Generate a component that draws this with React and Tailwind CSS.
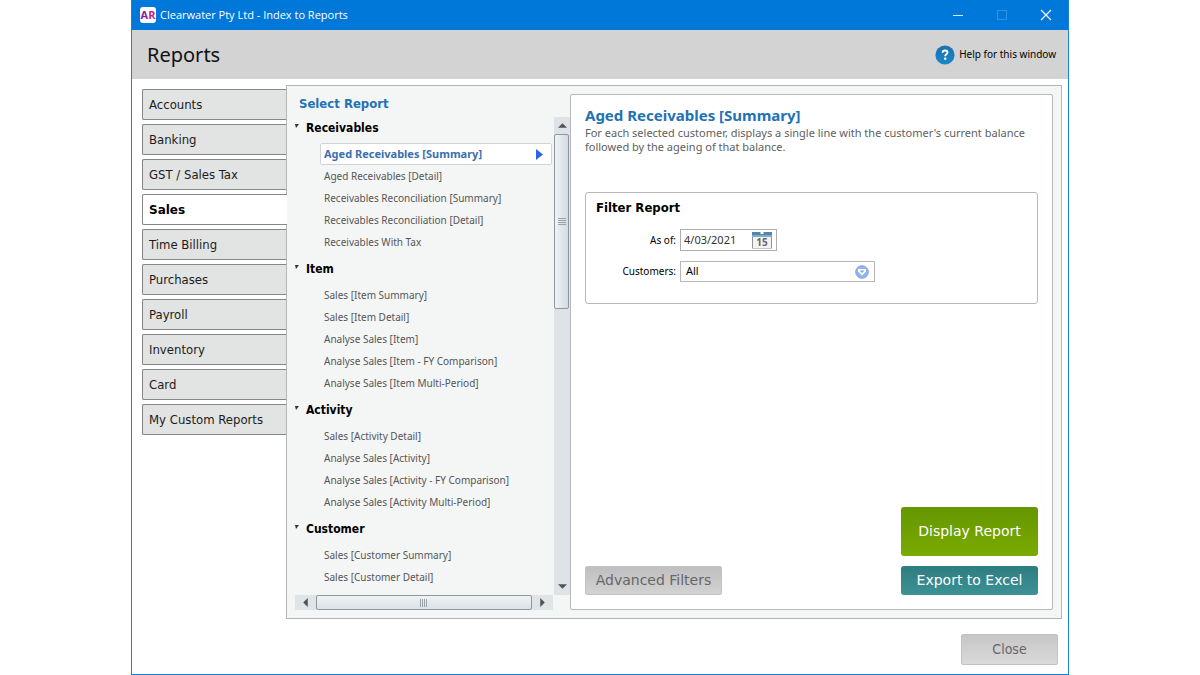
import React, { useState } from "react";

const TABS = [
  "Accounts",
  "Banking",
  "GST / Sales Tax",
  "Sales",
  "Time Billing",
  "Purchases",
  "Payroll",
  "Inventory",
  "Card",
  "My Custom Reports",
];

const GROUPS = [
  {
    name: "Receivables",
    reports: [
      "Aged Receivables [Summary]",
      "Aged Receivables [Detail]",
      "Receivables Reconciliation [Summary]",
      "Receivables Reconciliation [Detail]",
      "Receivables With Tax",
    ],
  },
  {
    name: "Item",
    reports: [
      "Sales [Item Summary]",
      "Sales [Item Detail]",
      "Analyse Sales [Item]",
      "Analyse Sales [Item - FY Comparison]",
      "Analyse Sales [Item Multi-Period]",
    ],
  },
  {
    name: "Activity",
    reports: [
      "Sales [Activity Detail]",
      "Analyse Sales [Activity]",
      "Analyse Sales [Activity - FY Comparison]",
      "Analyse Sales [Activity Multi-Period]",
    ],
  },
  {
    name: "Customer",
    reports: ["Sales [Customer Summary]", "Sales [Customer Detail]"],
  },
];

function TitleBar() {
  return (
    <div className="flex h-[30px] shrink-0 items-center bg-[#0078d9] pl-2 text-white">
      <svg className="size-4" viewBox="0 0 16 16" aria-hidden="true">
        <defs>
          <linearGradient id="brand" x1="0" x2="1">
            <stop offset="0" stopColor="#6a1fa8" />
            <stop offset="1" stopColor="#e0218a" />
          </linearGradient>
        </defs>
        <rect width="16" height="16" rx="3" fill="#fff" />
        <text
          x="8"
          y="12"
          textAnchor="middle"
          fontSize="11"
          fontWeight="700"
          fontFamily="Open Sans, sans-serif"
          fill="url(#brand)"
        >
          AR
        </text>
      </svg>
      <span className="pl-1 pt-px font-['Open_Sans',sans-serif] text-[11px]">
        Clearwater Pty Ltd - Index to Reports
      </span>
      <div className="ml-auto flex h-full">
        <button type="button" aria-label="Minimize" className="grid w-11 place-items-center">
          <svg className="size-3" viewBox="0 0 12 12" stroke="#d6eaff" fill="none">
            <path d="M1 6.500h10" />
          </svg>
        </button>
        <button type="button" aria-label="Maximize" disabled className="grid w-11 place-items-center">
          <svg className="size-3" viewBox="0 0 12 12" stroke="#2f93e6" fill="none">
            <rect x="1.500" y="1.500" width="9" height="9" />
          </svg>
        </button>
        <button type="button" aria-label="Close window" className="grid w-11 place-items-center">
          <svg className="size-3" viewBox="0 0 12 12" stroke="#fff" strokeWidth="1.200" fill="none">
            <path d="M1 1l10 10M11 1L1 11" />
          </svg>
        </button>
      </div>
    </div>
  );
}

function Header() {
  return (
    <header className="flex h-[49px] shrink-0 items-center justify-between bg-[#d3d3d3] pr-3 pl-[15px]">
      <h1 className="font-['Noto_Sans',sans-serif] text-[20px] text-[#111]">Reports</h1>
      <a
        href="#help"
        className="flex items-center gap-1 font-['Noto_Sans',sans-serif] text-[10px] text-black"
      >
        <svg className="size-5" viewBox="0 0 20 20" aria-hidden="true">
          <defs>
            <linearGradient id="help" x2="0" y2="1">
              <stop offset="0" stopColor="#1a6fae" />
              <stop offset="1" stopColor="#1c8acb" />
            </linearGradient>
          </defs>
          <circle cx="10" cy="10" r="9.600" fill="url(#help)" />
          <path
            d="M7.600 7.800c0-1.500 1-2.300 2.500-2.300s2.400.8 2.400 2c0 1.800-2.300 1.800-2.300 3.700"
            fill="none"
            stroke="#fff"
            strokeWidth="1.900"
          />
          <rect x="9.100" y="12.600" width="2.200" height="2.200" fill="#fff" />
        </svg>
        Help for this window
      </a>
    </header>
  );
}

function Tabs({ active, onSelect }) {
  return (
    <nav className="-mr-px flex w-[145px] shrink-0 flex-col gap-1 pt-1" aria-label="Report categories">
      {TABS.map((tab) => (
        <button
          key={tab}
          type="button"
          onClick={() => onSelect(tab)}
          className={
            "h-[31px] rounded-l-xs border border-[#858585] pl-1.5 text-left " +
            (tab === active
              ? "relative border-r-0 bg-white text-[12px] font-bold text-black"
              : "border-r-[#a9acae] bg-[#e2e3e3] font-['DejaVu_Sans_Condensed','DejaVu_Sans',sans-serif] text-[13px] text-[#1c1c1c]")
          }
        >
          {tab}
        </button>
      ))}
    </nav>
  );
}

function Arrow({ d }) {
  return (
    <svg className="size-[9px]" viewBox="0 0 8 8" fill="#4d5357" aria-hidden="true">
      <path d={d} />
    </svg>
  );
}

function VerticalScrollbar() {
  return (
    <div className="flex w-4 shrink-0 flex-col items-stretch bg-[#dfe3e7]">
      <button type="button" aria-label="Scroll up" className="grid h-[17px] place-items-center">
        <Arrow d="M0 6l4-4 4 4z" />
      </button>
      <div className="flex-1">
        <div className="grid h-[175px] w-[15px] place-items-center rounded-xs border border-[#8f969d] bg-linear-to-r from-[#f1f4f7] to-[#d4dae1]">
          <svg className="size-2" viewBox="0 0 8 8" stroke="#9aa1a8" aria-hidden="true">
            <path d="M0 .5h8M0 2.500h8M0 4.500h8M0 6.500h8" />
          </svg>
        </div>
      </div>
      <button type="button" aria-label="Scroll down" className="grid h-[17px] place-items-center">
        <Arrow d="M0 2l4 4 4-4z" />
      </button>
    </div>
  );
}

function HorizontalScrollbar() {
  return (
    <div className="mr-[17px] flex h-[15px] shrink-0 bg-[#dfe4e7]">
      <button type="button" aria-label="Scroll left" className="grid w-[21px] place-items-center">
        <Arrow d="M6 0l-4 4 4 4z" />
      </button>
      <div className="grid flex-1 place-items-center rounded-xs border border-[#8f969d] bg-linear-to-b from-[#f0f3f5] to-[#dce1e5]">
        <svg className="size-2" viewBox="0 0 8 8" stroke="#9aa1a8" aria-hidden="true">
          <path d="M.5 0v8M2.500 0v8M4.500 0v8M6.500 0v8" />
        </svg>
      </div>
      <button type="button" aria-label="Scroll right" className="grid w-[21px] place-items-center">
        <Arrow d="M2 0l4 4-4 4z" />
      </button>
    </div>
  );
}

function ReportTree({ selected, onSelect }) {
  return (
    <section className="flex w-[275px] shrink-0 flex-col font-['DejaVu_Sans_Condensed','DejaVu_Sans',sans-serif]">
      <h2 className="h-[19px] pl-1 text-[13px] leading-5 font-bold text-[#2272b4]">Select Report</h2>
      <div className="flex min-h-0 flex-1">
        <div className="min-w-0 flex-1 overflow-hidden pr-0.5">
          {GROUPS.map((group) => (
            <div key={group.name} className="mb-px">
              <h3 className="flex h-[30px] items-start gap-[7px] pt-[5px] text-[12px] leading-5 font-bold text-black">
                <svg className="mt-1.5 size-1" viewBox="0 0 4 4" fill="#333" aria-hidden="true">
                  <path d="M0 0h4L1 4z" />
                </svg>
                {group.name}
              </h3>
              <ul className="pl-[25px]">
                {group.reports.map((report) => (
                  <li key={report}>
                    <button
                      type="button"
                      onClick={() => onSelect(report)}
                      className={
                        "flex h-[22px] w-full items-center justify-between pl-[3px] text-left whitespace-nowrap " +
                        (report === selected
                          ? "rounded-xs border border-[#cfd4d8] bg-white font-['Noto_Sans',sans-serif] text-[11px] font-bold text-[#3a70b0]"
                          : "border border-transparent font-['Noto_Sans',sans-serif] text-[10px] text-[#555]")
                      }
                    >
                      {report}
                      {report === selected && (
                        <svg className="mr-2 h-[11px] w-[7px]" viewBox="0 0 7 11" aria-hidden="true">
                          <path d="M0 0l7 5.500L0 11z" fill="#2f62e0" />
                        </svg>
                      )}
                    </button>
                  </li>
                ))}
              </ul>
            </div>
          ))}
        </div>
        <div className="flex pt-1">
          <VerticalScrollbar />
        </div>
      </div>
      <HorizontalScrollbar />
    </section>
  );
}

function CalendarIcon() {
  return (
    <svg className="h-[18px] w-5" viewBox="0 0 20 18" aria-hidden="true">
      <rect x="1" y="2" width="18" height="15" fill="#f3f3f3" />
      <path d="M.5 5v12.500M19.500 5v12.500" stroke="#8f9498" />
      <path d="M1 17.500h18" stroke="#c3c6c8" />
      <rect x="0" y="1" width="20" height="3" fill="#4f86ad" />
      <rect x="0" y="4" width="20" height="2" fill="#83aac5" />
      <path d="M8.500 1h3v2h-3z" fill="#fff" />
      <text
        x="10"
        y="15"
        textAnchor="middle"
        fontSize="10"
        fontWeight="700"
        fontFamily="Noto Sans, sans-serif"
        fill="#666"
      >
        15
      </text>
    </svg>
  );
}

function FilterPanel() {
  const [date, setDate] = useState("4/03/2021");
  return (
    <section className="mt-[38px] h-28 rounded-[3px] border border-[#b6b9bc] px-2.5 pt-[5px]">
      <h3 className="text-[13px] leading-5 font-bold text-black">Filter Report</h3>
      <div className="mt-[11px] grid grid-cols-[80px_195px] items-center gap-x-1 gap-y-2.5 font-['Noto_Sans',sans-serif] text-[10px] text-black">
        <label htmlFor="as-of" className="text-right">
          As of:
        </label>
        <div className="flex h-[22px] w-[97px] items-center border border-[#abadb3] bg-white pr-1 pl-[3px]">
          <input
            id="as-of"
            value={date}
            onChange={(e) => setDate(e.target.value)}
            className="w-full min-w-0 flex-1 text-[11px] text-[#333] outline-none"
          />
          <button type="button" aria-label="Pick a date">
            <CalendarIcon />
          </button>
        </div>
        <label htmlFor="customers" className="text-right">
          Customers:
        </label>
        <div className="relative">
          <select
            id="customers"
            className="block h-[21px] w-full appearance-none rounded-none border border-[#b4b7bb] bg-white pl-[5px] text-[11px] outline-none"
          >
            <option>All</option>
          </select>
          <svg
            className="pointer-events-none absolute top-1 right-1.5 size-3.5"
            viewBox="0 0 14 14"
            aria-hidden="true"
          >
            <circle cx="7" cy="7" r="6.300" fill="#8fb4f0" stroke="#86a5d8" />
            <path d="M3 4h8v2.500L7 10.500 3 6.500z" fill="#fff" />
            <path d="M4.500 5.500h5L7 8z" fill="#7fa3e0" />
          </svg>
        </div>
      </div>
    </section>
  );
}

function ReportDetail({ title }) {
  return (
    <section className="flex min-w-0 flex-1 flex-col rounded-xs border border-[#b6b9bc] bg-white px-3.5 pb-3.5 font-['DejaVu_Sans_Condensed','DejaVu_Sans',sans-serif]">
      <h2 className="mt-2.5 mb-px font-['Noto_Sans',sans-serif] text-[15px] leading-5 font-bold text-[#2272b4]">
        {title}
      </h2>
      <p className="font-['Noto_Sans',sans-serif] text-[11px] leading-3.5 text-[#606060]">
        For each selected customer, displays a single line with the customer's current balance followed by the
        ageing of that balance.
      </p>
      <FilterPanel />
      <div className="mt-auto flex items-end justify-between">
        <button
          type="button"
          className="h-[29px] w-[137px] rounded-xs border border-[#c2c2c2] bg-linear-to-b from-[#bfbfbf] to-[#d2d2d2] font-['DejaVu_Sans',sans-serif] text-[14px] text-[#666]"
        >
          Advanced Filters
        </button>
        <div className="flex w-[137px] flex-col gap-2.5 font-['DejaVu_Sans',sans-serif] text-[14px] text-white">
          <button type="button" className="h-[49px] rounded-[3px] bg-linear-to-b from-[#659600] to-[#7aab00]">
            Display Report
          </button>
          <button type="button" className="h-[29px] rounded-[3px] bg-linear-to-b from-[#2e7d80] to-[#3c9296]">
            Export to Excel
          </button>
        </div>
      </div>
    </section>
  );
}

export default function App() {
  const [tab, setTab] = useState("Sales");
  const [report, setReport] = useState("Aged Receivables [Summary]");
  return (
    <div className="min-h-screen bg-white font-['DejaVu_Sans',sans-serif]">
      <main className="mx-auto flex min-h-screen w-full max-w-[938px] flex-col border border-t-0 border-[#1883d7] bg-white">
        <TitleBar />
        <Header />
        <div className="flex flex-1 pt-1.5 pr-1.5 pl-2.5">
          <Tabs active={tab} onSelect={setTab} />
          <div className="flex min-w-0 flex-1 border border-[#b3b6b8] bg-[#f4f6f6] p-2">
            <ReportTree selected={report} onSelect={setReport} />
            <ReportDetail title={report} />
          </div>
        </div>
        <footer className="flex h-[55px] shrink-0 items-center justify-end pr-2.5 pt-1.5">
          <button
            type="button"
            className="h-[31px] w-[97px] rounded-xs border border-[#c2c2c2] bg-linear-to-b from-[#c6c6c6] to-[#dadada] font-['DejaVu_Sans_Condensed','DejaVu_Sans',sans-serif] text-[14px] text-[#666]"
          >
            Close
          </button>
        </footer>
      </main>
    </div>
  );
}
